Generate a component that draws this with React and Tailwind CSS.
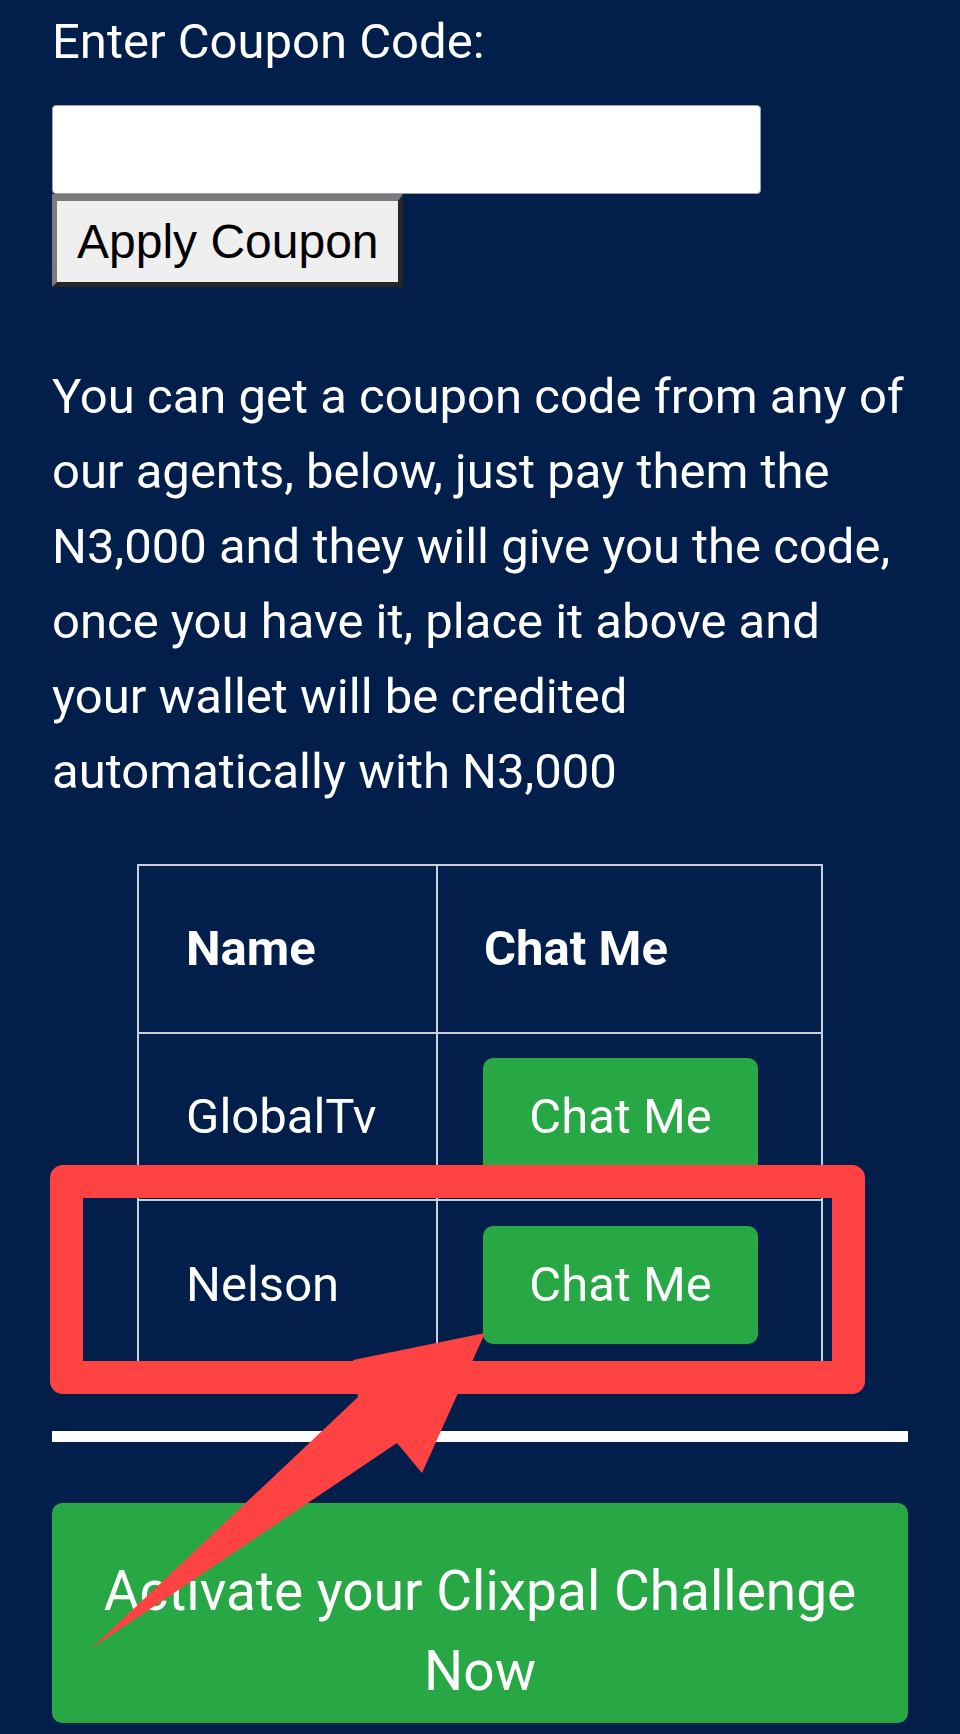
import React from "react";

export default function App() {
  return (
    <div className="relative min-h-[1734px] w-[960px] overflow-hidden bg-[#021f4b] font-['Roboto',_sans-serif] text-white">
      <div className="px-[52px]">
        <div className="pt-[6px] text-[49px] leading-[72px]">Enter Coupon Code:</div>
        <input
          type="text"
          className="mt-[27px] block h-[89px] w-[709px] rounded-[4px] border border-[#9aa3b0] bg-white"
        />
        <button
          type="button"
          className="block h-[93px] w-[351px] border-t-[7px] border-l-[5px] border-r-[5px] border-b-[5px] border-t-[#7a7a7a] border-l-[#7a7a7a] border-r-[#262626] border-b-[#262626] bg-[#efefef] pl-[20px] text-left font-['Liberation_Sans',_Arial,_sans-serif] text-[48px] leading-[56px] text-black"
        >
          Apply Coupon
        </button>
        <p className="mt-[72px] text-[49px] leading-[75px]">
          You can get a coupon code from any of our agents, below, just pay them the N3,000 and they will give you the code, once you have it, place it above and your wallet will be credited automatically with N3,000
        </p>
        <table className="mx-auto mt-[55px] w-[686px] border-collapse text-[49px] leading-[72px]">
          <tbody>
            <tr className="h-[168px]">
              <th className="w-[299px] border-2 border-[#c9ced8] pl-[47px] text-left align-middle font-bold">Name</th>
              <th className="border-2 border-[#c9ced8] pl-[46px] text-left align-middle font-bold">Chat Me</th>
            </tr>
            <tr className="h-[167px]">
              <td className="border-2 border-[#c9ced8] pl-[47px] align-middle">GlobalTv</td>
              <td className="border-2 border-[#c9ced8] pl-[45px] align-middle">
                <button type="button" className="flex h-[118px] w-[275px] items-center justify-center rounded-[10px] bg-[#28a745] text-[49px] text-white">
                  Chat Me
                </button>
              </td>
            </tr>
            <tr className="h-[170px]">
              <td className="border-2 border-[#c9ced8] pl-[47px] align-middle">Nelson</td>
              <td className="border-2 border-[#c9ced8] pl-[45px] align-middle">
                <button type="button" className="flex h-[118px] w-[275px] items-center justify-center rounded-[10px] bg-[#28a745] text-[49px] text-white">
                  Chat Me
                </button>
              </td>
            </tr>
          </tbody>
        </table>
        <div className="mt-[60px] h-[11px] w-full bg-white" />
        <button
          type="button"
          className="mt-[61px] flex h-[220px] w-full items-start justify-center rounded-[10px] bg-[#28a745] px-[40px] pt-[48px] text-center text-[55px] leading-[80px] text-white"
        >
          Activate your Clixpal Challenge Now
        </button>
      </div>

      <div className="pointer-events-none absolute left-[50px] top-[1165px] h-[229px] w-[815px] rounded-[13px] border-[33px] border-[#ff4343]" />
      <svg
        className="pointer-events-none absolute left-0 top-0"
        width="960"
        height="1734"
        viewBox="0 0 960 1734"
      >
        <polygon
          points="92,1648 397,1443 422,1473 485,1333 353,1360 358,1397"
          fill="#ff4343"
        />
      </svg>
    </div>
  );
}
